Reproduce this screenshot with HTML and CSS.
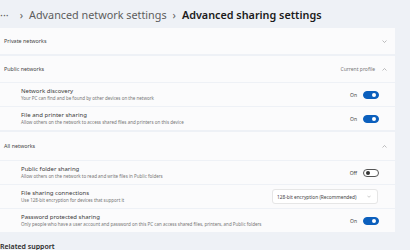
FILE: index.html
```html
<!doctype html>
<html lang="en">
<head>
	<meta charset="utf-8">
	<meta name="viewport" content="width=device-width, initial-scale=1">
	<title>Advanced sharing settings</title>
	<link rel="stylesheet" href="styles.css">
</head>
<body>
	<main class="page">

		<h1 class="crumbs">
			<span class="crumbs-more">···</span>
			<span class="crumbs-sep">›</span>
			<span class="crumbs-link">Advanced network settings</span>
			<span class="crumbs-sep">›</span>
			<span class="crumbs-current">Advanced sharing settings</span>
		</h1>

		<section class="group">
			<div class="group-head">
				<span class="group-title">Private networks</span>
				<svg class="chev" viewBox="0 0 10 6"><path d="M1 1l4 4 4-4"/></svg>
			</div>
		</section>

		<section class="group">
			<div class="group-head">
				<span class="group-title">Public networks</span>
				<span class="group-note">Current profile</span>
				<svg class="chev" viewBox="0 0 10 6"><path d="M1 5l4-4 4 4"/></svg>
			</div>
			<div class="row">
				<div class="row-text">
					<div class="row-title">Network discovery</div>
					<div class="row-desc">Your PC can find and be found by other devices on the network</div>
				</div>
				<span class="state">On</span>
				<span class="toggle toggle-on"></span>
			</div>
			<div class="row">
				<div class="row-text">
					<div class="row-title">File and printer sharing</div>
					<div class="row-desc">Allow others on the network to access shared files and printers on this device</div>
				</div>
				<span class="state">On</span>
				<span class="toggle toggle-on"></span>
			</div>
		</section>

		<section class="group">
			<div class="group-head group-head-tall">
				<span class="group-title">All networks</span>
				<svg class="chev" viewBox="0 0 10 6"><path d="M1 5l4-4 4 4"/></svg>
			</div>
			<div class="row">
				<div class="row-text">
					<div class="row-title">Public folder sharing</div>
					<div class="row-desc">Allow others on the network to read and write files in Public folders</div>
				</div>
				<span class="state">Off</span>
				<span class="toggle"></span>
			</div>
			<div class="row">
				<div class="row-text">
					<div class="row-title">File sharing connections</div>
					<div class="row-desc">Use 128-bit encryption for devices that support it</div>
				</div>
				<div class="select">
					<span>128-bit encryption (Recommended)</span>
					<svg class="chev chev-small" viewBox="0 0 10 6"><path d="M1 1l4 4 4-4"/></svg>
				</div>
			</div>
			<div class="row">
				<div class="row-text">
					<div class="row-title">Password protected sharing</div>
					<div class="row-desc">Only people who have a user account and password on this PC can access shared files, printers, and Public folders</div>
				</div>
				<span class="state">On</span>
				<span class="toggle toggle-on"></span>
			</div>
		</section>

		<h2 class="related">Related support</h2>

	</main>
</body>
</html>
```

FILE: styles.css
```css
:root {
	--bg: #eef1f6;
	--card: #fbfbfc;
	--text: #2a2a2a;
	--text-grey: #777;
	--accent: #0b5fbd;
	--font: 'Noto Sans', 'Open Sans', sans-serif;
}

*,
::after,
::before {
	box-sizing: border-box;
	margin: 0;
	padding: 0;
}

body {
	color: var(--text);
	font-family: var(--font);
	background: var(--bg);
	overflow: hidden;
}

.page {
	width: 395px;
}

/* Хлебные крошки */
.crumbs {
	display: flex;
	align-items: center;
	height: 28px;
	font-size: 10.8px;
	font-weight: 400;
	white-space: nowrap;
}

.crumbs-more,
.crumbs-link,
.crumbs-sep {
	color: #5d5d5d;
}

.crumbs-more {
	margin-right: 5px;
}

.crumbs-sep {
	margin: 0 6px;
}

.crumbs-current {
	font-weight: 600;
	color: #1b1b1b;
}

/* Группы настроек */
.group {
	display: flex;
	flex-direction: column;
	gap: 1px;
	margin-bottom: 2px;
}

.group-head,
.row {
	display: flex;
	align-items: center;
	background: var(--card);
}

.group-head {
	height: 26px;
	padding: 0 8px 0 4px;
}

.group-head-tall {
	height: 28px;
}

.group-title {
	flex: 1;
	font-size: 5.4px;
	color: #444;
}

.group-note {
	margin-right: 7px;
	color: var(--text-grey);
	font-size: 5px;
}

.chev {
	width: 5px;
	height: 3px;
	fill: none;
	stroke: #888;
	stroke-width: 1.1;
}

.row {
	height: 23px;
	padding: 0 16px 0 21px;
}

.row-text {
	flex: 1;
	min-width: 0;
	white-space: nowrap;
}

.row-title {
	color: #3a3a3a;
	font-size: 6px;
	line-height: 8px;
}

.row-desc {
	color: var(--text-grey);
	font-size: 4.5px;
	line-height: 7px;
}

.state {
	margin-right: 6px;
	color: #444;
	font-size: 5px;
}

/* Переключатель */
.toggle {
	position: relative;
	flex: none;
	width: 16px;
	height: 8px;
	border: 1px solid #555;
	border-radius: 4px;
	background: #fff;
}

.toggle::after {
	content: '';
	position: absolute;
	top: 1px;
	left: 2px;
	width: 4px;
	height: 4px;
	border-radius: 50%;
	background: #333;
}

.toggle-on {
	border-color: var(--accent);
	background: var(--accent);
}

.toggle-on::after {
	left: auto;
	right: 2px;
	background: #fff;
}

/* Выпадающий список */
.select {
	display: flex;
	align-items: center;
	justify-content: space-between;
	width: 106px;
	height: 15px;
	margin-right: 1px;
	padding: 0 6px 0 4px;
	border: 1px solid #e6e6e6;
	border-radius: 3px;
	background: #fff;
	color: #444;
	font-size: 4.8px;
}

.chev-small {
	width: 4px;
	height: 3px;
}

.related {
	margin: 10px 0 0 0;
	font-size: 7px;
	font-weight: 600;
}
```
